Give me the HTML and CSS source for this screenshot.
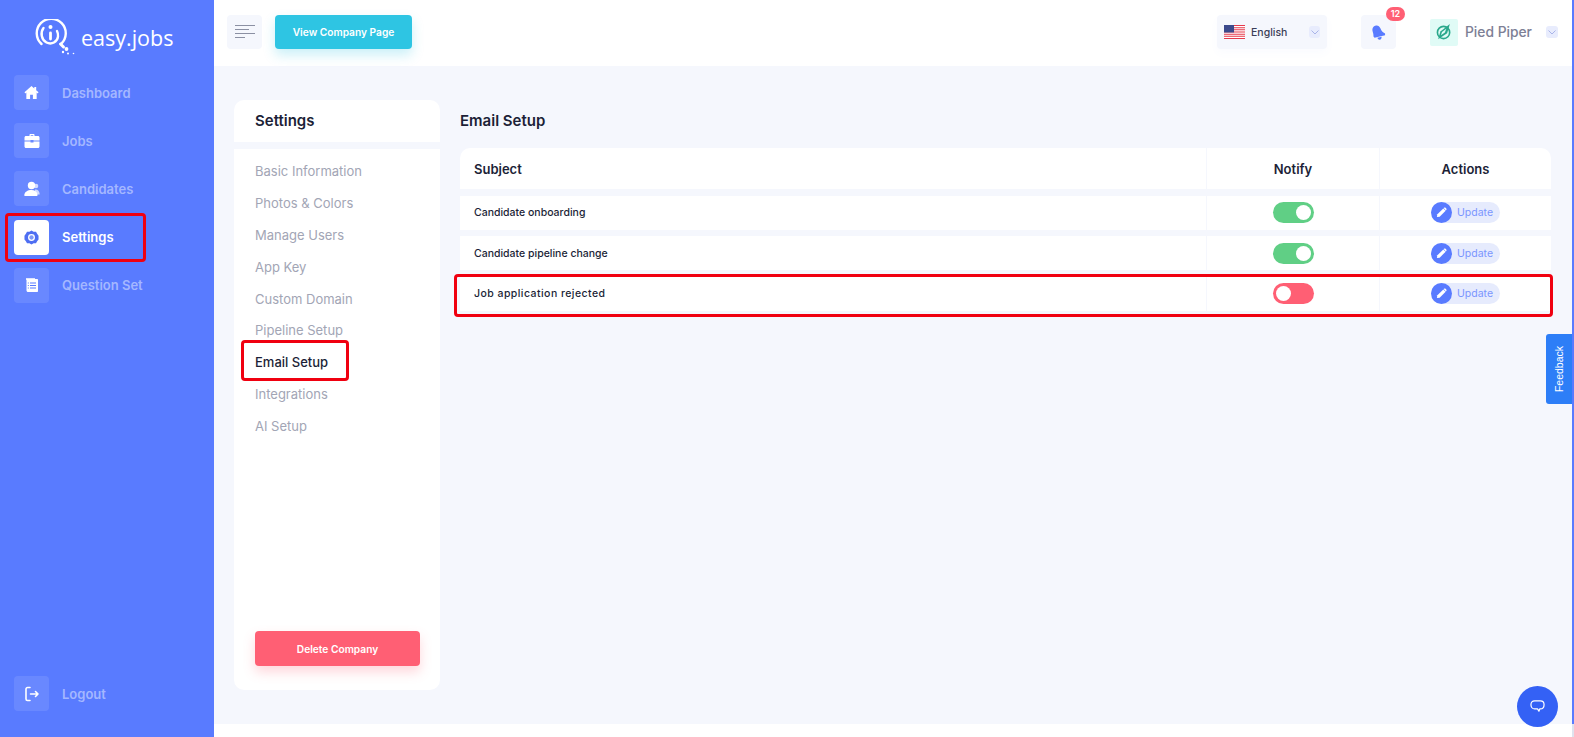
FILE: index.html
```html
<!DOCTYPE html>
<html lang="en">
<head>
  <meta charset="UTF-8" />
  <meta name="viewport" content="width=device-width, initial-scale=1.0" />
  <title>Email Setup</title>
  <link rel="stylesheet" href="styles.css">
</head>
<body>
  <aside class="sidebar">
    <div class="brand">
      <svg class="brand-logo" viewBox="0 0 40 36" width="40" height="36" fill="none" stroke="#fff" stroke-linecap="round">
        <path d="M6.500 25A14.500 14.500 0 1 1 26 25" stroke-width="2.400"/>
        <path d="M8.500 9C5 13.500 6.500 21 11.500 23.500C16.500 26 22.500 23 23 17.500C23.200 15.500 22.800 13.500 22 12" stroke-width="2.400"/>
        <path d="M15.500 14V20" stroke-width="2.800"/>
        <circle cx="15.500" cy="8" r="2" fill="#fff" stroke="none"/>
        <path d="M25.500 25L28.500 28" stroke-width="3"/>
        <circle cx="31.500" cy="30" r="1.900" fill="#fff" stroke="none"/>
        <circle cx="28" cy="33" r="1.200" fill="#fff" stroke="none"/>
        <circle cx="33" cy="34.500" r="1" fill="#fff" stroke="none"/>
        <circle cx="38.500" cy="34.500" r=".8" fill="#fff" stroke="none"/>
      </svg>
      <span class="brand-name">easy.jobs</span>
    </div>

    <nav class="side-nav">
      <a class="side-link">
        <span class="side-icon">
          <svg viewBox="0 0 16 16" width="15" height="15" fill="#fff"><path d="M8 1L0.500 7.800 1.500 9 2.500 8.100V15H6.500V10.500H9.500V15H13.500V8.100L14.500 9 15.500 7.800 13 5.500V2H11V3.700Z"/></svg>
        </span>
        Dashboard
      </a>
      <a class="side-link">
        <span class="side-icon">
          <svg viewBox="0 0 16 16" width="16" height="16" fill="#fff"><path d="M5.500 3V1.800C5.500 1.300 5.900 1 6.300 1H9.700C10.100 1 10.500 1.300 10.500 1.800V3H14C14.800 3 15.500 3.700 15.500 4.500V7.500H9.500V7H6.500V7.500H0.500V4.500C0.500 3.700 1.200 3 2 3ZM6.700 3H9.300V2.200H6.700ZM0.500 8.600H6.500V9.500H9.500V8.600H15.500V13.500C15.500 14.300 14.800 15 14 15H2C1.200 15 0.500 14.300 0.500 13.500Z"/></svg>
        </span>
        Jobs
      </a>
      <a class="side-link">
        <span class="side-icon">
          <svg viewBox="0 0 16 16" width="16" height="16" fill="#fff"><circle cx="12" cy="5" r="2.300" opacity=".7"/><path d="M11 8.500C13.500 8.200 15.700 10 15.700 13.500H10Z" opacity=".7"/><circle cx="7.500" cy="4.500" r="3.700"/><path d="M1 15C0.500 15 0.300 14.500 0.300 14C0.500 11 3.500 9 7.500 9C10.500 9 13 10.500 13.500 13.500C13.600 14.500 13.200 15 12.500 15Z"/></svg>
        </span>
        Candidates
      </a>
      <a class="side-link is-active is-marked">
        <span class="side-icon">
          <svg viewBox="0 0 16 16" width="15" height="15"><path fill="#4e6ef2" fill-rule="evenodd" d="M8 0.500L10.200 1.800 12.800 1.800 14 4 15.500 6 15.500 10 14 12 12.800 14.200 10.200 14.200 8 15.500 5.800 14.200 3.200 14.200 2 12 0.500 10 0.500 6 2 4 3.200 1.800 5.800 1.800ZM8 4.300A3.700 3.700 0 1 0 8 11.700 3.700 3.700 0 1 0 8 4.300Z"/><circle cx="8" cy="8" r="2.300" fill="#7e97f7"/></svg>
        </span>
        Settings
      </a>
      <a class="side-link">
        <span class="side-icon">
          <svg viewBox="0 0 16 16" width="16" height="16"><path fill="#dfe6ff" d="M2 1H11V3H2Z"/><path fill="#fff" d="M2.500 2H13C13.600 2 14 2.400 14 3V14C14 14.600 13.600 15 13 15H4C3.200 15 2.500 14.300 2.500 13.500Z"/><path stroke="#597bff" stroke-width="1" d="M6 6H12M6 8.500H12M6 11H12"/><path stroke="#597bff" stroke-width="1" d="M3.800 6H4.800M3.800 8.500H4.800M3.800 11H4.800"/></svg>
        </span>
        Question Set
      </a>
    </nav>

    <a class="side-link logout">
      <span class="side-icon">
        <svg viewBox="0 0 16 16" width="16" height="16" fill="none" stroke="#fff" stroke-width="1.600" stroke-linecap="round" stroke-linejoin="round"><path d="M6 1.500H3.500C2.700 1.500 2 2.200 2 3V13C2 13.800 2.700 14.500 3.500 14.500H6"/><path d="M6.500 8H14M11.500 5.500L14 8 11.500 10.500"/></svg>
      </span>
      Logout
    </a>
  </aside>

  <div class="page">
    <div class="page-inner">
      <header class="topbar">
        <button class="menu-btn">
          <svg viewBox="0 0 20 15" width="20" height="15" stroke="#8b90a3" stroke-width="1"><path d="M0 .5H20M0 4.500H14M0 8.500H20M0 12.500H10"/></svg>
        </button>
        <button class="company-btn">View Company Page</button>

        <div class="lang">
          <svg class="flag" viewBox="0 0 21 14" width="21" height="14">
            <rect width="21" height="14" fill="#fff"/>
            <path stroke="#e63a4c" stroke-width="1.100" d="M0 .5H21M0 2.700H21M0 4.800H21M0 7H21M0 9.200H21M0 11.300H21M0 13.500H21"/>
            <rect width="10" height="7.500" fill="#3c4a8c"/>
          </svg>
          <span class="lang-name">English</span>
          <span class="chev"><svg viewBox="0 0 8 5" width="8" height="5" fill="none" stroke="#a9b4e8"><path d="M.5 .5L4 4 7.500 .5"/></svg></span>
        </div>

        <div class="bell">
          <svg viewBox="0 0 16 16" width="15" height="15" fill="#597bff"><path d="M4.500 .8C7 -.2 9 1.200 10 3.500C11 6.500 12.500 8 15 9L15 10.800 3.800 13.500 2.500 12C3 9.500 1.800 8 1.500 5.500C1.300 3.300 2.500 1.500 4.500 .8Z"/><path d="M6.800 13.500L11.300 12.400C11.500 14.200 10.500 15.500 9.300 15.600 8.100 15.700 7.200 14.800 6.800 13.500Z"/></svg>
          <span class="badge">12</span>
        </div>

        <div class="company">
          <span class="company-logo">
            <svg viewBox="0 0 20 20" width="18" height="18"><circle cx="9.500" cy="10.500" r="6.800" fill="none" stroke="#2aa98c" stroke-width="1.800"/><path fill="#2aa98c" d="M3.500 18L6 9.500 16.500 1 13.500 11.500Z"/><path fill="#e0fbf6" d="M6.500 13.500L7.800 10 12.500 6.500 11 10.500Z"/></svg>
          </span>
          <span class="company-name">Pied Piper</span>
          <span class="chev"><svg viewBox="0 0 8 5" width="8" height="5" fill="none" stroke="#a9b4e8"><path d="M.5 .5L4 4 7.500 .5"/></svg></span>
        </div>
      </header>

      <main class="content">
        <section class="settings-panel">
          <h2 class="settings-head">Settings</h2>
          <div class="settings-body">
            <ul class="settings-list">
              <li>Basic Information</li>
              <li>Photos &amp; Colors</li>
              <li>Manage Users</li>
              <li>App Key</li>
              <li>Custom Domain</li>
              <li>Pipeline Setup</li>
              <li class="is-current is-marked">Email Setup</li>
              <li>Integrations</li>
              <li>AI Setup</li>
            </ul>
            <button class="delete-btn">Delete Company</button>
          </div>
        </section>

        <section class="email-setup">
          <h2 class="email-title">Email Setup</h2>
          <div class="email-table">
            <div class="row row-head">
              <div class="cell">Subject</div>
              <div class="cell cell-mid">Notify</div>
              <div class="cell cell-mid">Actions</div>
            </div>
            <div class="row">
              <div class="cell">Candidate onboarding</div>
              <div class="cell cell-mid"><span class="toggle is-on"></span></div>
              <div class="cell cell-mid">
                <a class="update">
                  <span class="update-icon"><svg viewBox="0 0 12 12" width="11" height="11" fill="#fff"><path d="M8 1.500L10.500 4 4 10.500 1 11 1.500 8Z"/><path d="M8.800 .8C9.300 .3 9.900 .3 10.400 .8L11.200 1.600C11.700 2.100 11.700 2.700 11.200 3.200L10.800 3.700 8.300 1.200Z"/></svg></span>
                  Update
                </a>
              </div>
            </div>
            <div class="row">
              <div class="cell">Candidate pipeline change</div>
              <div class="cell cell-mid"><span class="toggle is-on"></span></div>
              <div class="cell cell-mid">
                <a class="update">
                  <span class="update-icon"><svg viewBox="0 0 12 12" width="11" height="11" fill="#fff"><path d="M8 1.500L10.500 4 4 10.500 1 11 1.500 8Z"/><path d="M8.800 .8C9.300 .3 9.900 .3 10.400 .8L11.200 1.600C11.700 2.100 11.700 2.700 11.200 3.200L10.800 3.700 8.300 1.200Z"/></svg></span>
                  Update
                </a>
              </div>
            </div>
            <div class="row is-marked">
              <div class="cell">Job application rejected</div>
              <div class="cell cell-mid"><span class="toggle"></span></div>
              <div class="cell cell-mid">
                <a class="update">
                  <span class="update-icon"><svg viewBox="0 0 12 12" width="11" height="11" fill="#fff"><path d="M8 1.500L10.500 4 4 10.500 1 11 1.500 8Z"/><path d="M8.800 .8C9.300 .3 9.900 .3 10.400 .8L11.200 1.600C11.700 2.100 11.700 2.700 11.200 3.200L10.800 3.700 8.300 1.200Z"/></svg></span>
                  Update
                </a>
              </div>
            </div>
          </div>
        </section>
      </main>
    </div>
    <div class="page-foot"></div>
  </div>

  <a class="feedback"><span>Feedback</span></a>
  <a class="chat">
    <svg viewBox="0 0 16 16" width="15" height="15" fill="none" stroke="#fff" stroke-width="1.300" stroke-linejoin="round"><path d="M5 2H11C13.500 2 15 3.500 15 6S13.500 10.500 11 10.500H10.500L9.500 13 8 10.500H5C2.500 10.500 1 8.500 1 6S2.500 2 5 2Z"/></svg>
  </a>
</body>
</html>
```

FILE: styles.css
```css
:root {
  --primary: #597bff;
  --bg: #f5f7fd;
  --card: #ffffff;
  --text: #1c1f37;
  --muted: #a2a5b5;
  --mark: #f00010;
}

*, *::before, *::after {
  box-sizing: border-box;
}

html, body {
  height: 100%;
}

body {
  margin: 0;
  display: flex;
  overflow: hidden;
  font-family: "Inter", "Liberation Sans", sans-serif;
  color: var(--text);
  background: #fff;
}

/* sidebar */
.sidebar {
  width: 214px;
  flex: none;
  display: flex;
  flex-direction: column;
  padding: 18px 14px 26px;
  background: var(--primary);
}

.brand {
  display: flex;
  align-items: center;
  gap: 6px;
  height: 38px;
  padding-left: 21px;
  margin-bottom: 19px;
}

.brand-name {
  font-family: "Open Sans", sans-serif;
  font-size: 21.500px;
  color: #fff;
}

.side-nav {
  display: flex;
  flex-direction: column;
  gap: 13.200px;
  flex: 1;
}

.side-link {
  position: relative;
  display: flex;
  align-items: center;
  gap: 13px;
  height: 35px;
  font-size: 13px;
  font-weight: 600;
  color: #a4b7ff;
}

.side-icon {
  width: 35px;
  height: 35px;
  display: flex;
  align-items: center;
  justify-content: center;
  border-radius: 4px;
  background: rgba(255, 255, 255, 0.1);
}

.side-link.is-active {
  color: #fff;
}

.side-link.is-active .side-icon {
  background: #fff;
}

/* red annotation frames */
.is-marked {
  position: relative;
}

.is-marked::after {
  content: "";
  position: absolute;
  border: 3px solid var(--mark);
  border-radius: 4px;
  pointer-events: none;
}

.side-link.is-marked::after {
  top: -7px;
  left: -9px;
  width: 141px;
  height: 49px;
}

/* main column */
.page {
  flex: 1;
  display: flex;
  flex-direction: column;
}

.page-inner {
  flex: 1;
  display: flex;
  flex-direction: column;
  border-right: 2px solid var(--primary);
  background: var(--bg);
}

.page-foot {
  height: 13px;
  background: #fff;
  border-right: 2px solid #dfe3ee;
}

.topbar {
  height: 66px;
  flex: none;
  display: flex;
  align-items: center;
  padding: 0 14px 2px 13px;
  background: #fff;
}

.menu-btn {
  width: 35px;
  height: 34px;
  border: none;
  border-radius: 4px;
  padding: 0;
  display: flex;
  align-items: center;
  justify-content: center;
  background: var(--bg);
}

.company-btn {
  width: 137px;
  height: 34px;
  margin-left: 13px;
  border: none;
  border-radius: 4px;
  font-family: inherit;
  font-size: 10.200px;
  font-weight: 600;
  color: #fff;
  background: #2ec5e3;
  box-shadow: 0 6px 12px rgba(46, 197, 227, 0.25);
}

.lang {
  width: 110px;
  height: 34px;
  margin-left: auto;
  display: flex;
  align-items: center;
  padding: 0 7px;
  border-radius: 4px;
  background: var(--bg);
  box-shadow: 0 4px 8px rgba(89, 123, 255, 0.03);
}

.lang-name {
  margin-left: 6px;
  font-size: 10.500px;
  font-weight: 500;
  color: #3b3e58;
}

.chev {
  width: 11px;
  height: 12px;
  margin-left: auto;
  display: flex;
  align-items: center;
  justify-content: center;
  border-radius: 3px;
  background: #e8ecfd;
}

.bell {
  position: relative;
  width: 35px;
  height: 34px;
  margin-left: 34px;
  display: flex;
  align-items: center;
  justify-content: center;
  border-radius: 4px;
  background: var(--bg);
}

.badge {
  position: absolute;
  top: -8px;
  left: 25px;
  width: 19px;
  height: 14px;
  border-radius: 7px;
  font-size: 9px;
  font-weight: 600;
  line-height: 14px;
  text-align: center;
  color: #fff;
  background: #ff5f74;
}

.company {
  width: 128px;
  margin-left: 34px;
  display: flex;
  align-items: center;
}

.company-logo {
  width: 28px;
  height: 27px;
  display: flex;
  align-items: center;
  justify-content: center;
  border-radius: 2px;
  background: #e0fbf6;
}

.company-name {
  margin-left: 7px;
  font-size: 13.800px;
  font-weight: 500;
  color: #7d8095;
}

.company .chev {
  width: 12px;
}

.content {
  flex: 1;
  display: flex;
  gap: 20px;
  padding: 34px 21px 34px 20px;
}

/* settings panel */
.settings-panel {
  width: 206px;
  flex: none;
  display: flex;
  flex-direction: column;
  gap: 7px;
}

.settings-head {
  margin: 0;
  height: 42px;
  padding-left: 21px;
  font-size: 15px;
  font-weight: 600;
  line-height: 41px;
  border-radius: 10px 10px 0 0;
  background: var(--card);
}

.settings-body {
  flex: 1;
  display: flex;
  flex-direction: column;
  justify-content: space-between;
  padding: 6px 20px 24px 21px;
  border-radius: 0 0 10px 10px;
  background: var(--card);
}

.settings-list {
  list-style: none;
  margin: 0;
  padding: 0;
}

.settings-list li {
  height: 31.900px;
  font-size: 13px;
  line-height: 32px;
  color: var(--muted);
}

.settings-list .is-current {
  color: var(--text);
  font-weight: 500;
}

.settings-list .is-marked::after {
  top: -6px;
  left: -14px;
  width: 108px;
  height: 41px;
}

.delete-btn {
  width: 165px;
  height: 35px;
  border: none;
  border-radius: 4px;
  font-family: inherit;
  font-size: 10.200px;
  font-weight: 600;
  color: #fff;
  background: #ff5f74;
  box-shadow: 0 6px 12px rgba(255, 95, 116, 0.25);
}

/* email setup table */
.email-setup {
  flex: 1;
}

.email-title {
  margin: 0;
  height: 48px;
  font-size: 15px;
  font-weight: 600;
  line-height: 41px;
}

.email-table {
  display: flex;
  flex-direction: column;
  gap: 6.500px;
}

.row {
  display: grid;
  grid-template-columns: 1fr 173px 172px;
  height: 34px;
  background: var(--card);
}

.row.is-marked::after {
  top: -3px;
  right: -2px;
  bottom: -6px;
  left: -6px;
}

.row-head {
  height: 41px;
  border-radius: 10px 10px 0 0;
}

.cell {
  display: flex;
  align-items: center;
  padding-left: 14px;
  font-size: 10.500px;
  font-weight: 500;
}

.row-head .cell {
  font-size: 13px;
  font-weight: 600;
}

/* this label runs wider in the reference than in the fallback font */
.row.is-marked .cell:first-child {
  letter-spacing: 0.450px;
}

.cell-mid {
  justify-content: center;
  padding-left: 0;
  border-left: 1px solid #f5f7fd;
}

.toggle {
  position: relative;
  width: 41px;
  height: 21px;
  border-radius: 11px;
  background: #ff5f74;
}

.toggle::after {
  content: "";
  position: absolute;
  top: 3px;
  left: 3px;
  width: 15px;
  height: 15px;
  border-radius: 50%;
  background: #fff;
}

.toggle.is-on {
  background: #60cf85;
}

.toggle.is-on::after {
  left: 23px;
}

.update {
  width: 69px;
  height: 21px;
  display: flex;
  align-items: center;
  gap: 5px;
  border-radius: 11px;
  font-size: 10.500px;
  font-weight: 400;
  color: #7a95ff;
  background: #e6ebfd;
}

.update-icon {
  width: 21px;
  height: 21px;
  display: flex;
  align-items: center;
  justify-content: center;
  border-radius: 50%;
  background: var(--primary);
}

/* floating helpers */
.feedback {
  position: fixed;
  top: 334px;
  right: 2px;
  width: 26px;
  height: 70px;
  display: flex;
  align-items: center;
  justify-content: center;
  border-radius: 3px 0 0 3px;
  background: #2d7ef7;
}

.feedback span {
  transform: rotate(-90deg);
  font-family: "Liberation Sans", sans-serif;
  font-size: 10.500px;
  color: #fff;
}

.chat {
  position: fixed;
  left: 1517px;
  top: 686px;
  width: 41px;
  height: 41px;
  display: flex;
  align-items: center;
  justify-content: center;
  border-radius: 50%;
  background: #3461f5;
}
```
